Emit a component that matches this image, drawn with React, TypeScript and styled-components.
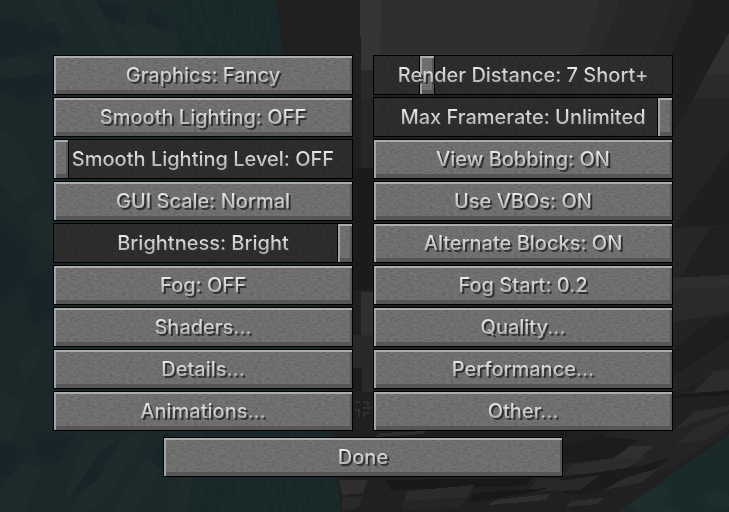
import React, { useState } from "react";
import styled, { createGlobalStyle, css } from "styled-components";

const Global = createGlobalStyle`
  * { box-sizing: border-box; }
  html, body, #root { margin: 0; min-height: 100%; }
  body { background: #202020; }
`;

const grain = `url("data:image/svg+xml,%3Csvg xmlns='http://www.w3.org/2000/svg' width='128' height='64'%3E%3Cfilter id='g' x='0' y='0' width='100%25' height='100%25'%3E%3CfeTurbulence type='fractalNoise' baseFrequency='.25 .6' numOctaves='2' seed='4' stitchTiles='stitch'/%3E%3CfeColorMatrix values='0 0 0 0 0 0 0 0 0 0 0 0 0 0 0 .3 0 0 0 -.11'/%3E%3C/filter%3E%3Crect width='128' height='64' filter='url(%23g)'/%3E%3C/svg%3E")`;

const Page = styled.main`
  position: relative;
  min-height: 100vh;
  padding: 55px 56px 35px 53px;
  display: flex;
  flex-direction: column;
  align-items: center;
  gap: 6px;
  overflow: hidden;
  font-family: Inter, "DejaVu Sans", sans-serif;
`;

const Backdrop = styled.svg`
  position: absolute;
  inset: 0;
  width: 100%;
  height: 100%;
`;

const Options = styled.div`
  position: relative;
  width: 100%;
  display: grid;
  grid-template-columns: 1fr 1fr;
  column-gap: 20px;
  row-gap: 2px;
`;

const bevel = css`
  border: 1px solid #000;
  border-radius: 0;
  background: ${grain} #737373;
  box-shadow: inset 0 2px #acacac, inset 2px 0 #a4a4a4, inset -2px 0 #565656,
    inset 0 -4px #565656;
`;

const Caption = styled.span`
  font-size: 20px;
  font-weight: 500;
  line-height: 24px;
  white-space: nowrap;
  color: transparent;
  background: linear-gradient(#e8e8e8 20%, #b4b4b4 80%);
  background-clip: text;
  -webkit-background-clip: text;
`;

const StoneButton = styled.button<{ $wide?: boolean }>`
  ${bevel}
  position: relative;
  width: 100%;
  max-width: ${(p) => (p.$wide ? "400px" : "none")};
  height: 40px;
  padding: 0;
  font-family: inherit;
  cursor: pointer;
  ${Caption} { filter: drop-shadow(2px 2px 0 #303030); }
  &:hover { background-color: #7a7f8c; }
`;

const SliderField = styled.label`
  position: relative;
  display: grid;
  place-items: center;
  height: 40px;
  border: 1px solid #000;
  background: ${grain} #2e2e2e;
  > * { grid-area: 1 / 1; }
  ${Caption} {
    z-index: 1;
    pointer-events: none;
    filter: drop-shadow(2px 2px 0 #303030);
  }
`;

const Range = styled.input`
  appearance: none;
  justify-self: stretch;
  height: 40px;
  margin: -1px;
  background: transparent;
  cursor: pointer;
  &::-webkit-slider-thumb {
    ${bevel}
    appearance: none;
    width: 16px;
    height: 40px;
  }
`;

type Option =
  | { kind: "button"; text: string }
  | { kind: "slider"; text: string; min: number; max: number; value: number };

const button = (text: string): Option => ({ kind: "button", text });
const slider = (text: string, min: number, max: number, value: number): Option => ({
  kind: "slider", text, min, max, value,
});

const options: Option[] = [
  button("Graphics: Fancy"),
  slider("Render Distance: 7 Short+", 2, 33, 7),
  button("Smooth Lighting: OFF"),
  slider("Max Framerate: Unlimited", 0, 260, 260),
  slider("Smooth Lighting Level: OFF", 0, 100, 0),
  button("View Bobbing: ON"),
  button("GUI Scale: Normal"),
  button("Use VBOs: ON"),
  slider("Brightness: Bright", 0, 100, 100),
  button("Alternate Blocks: ON"),
  button("Fog: OFF"),
  button("Fog Start: 0.2"),
  button("Shaders..."),
  button("Quality..."),
  button("Details..."),
  button("Performance..."),
  button("Animations..."),
  button("Other..."),
];

function SliderOption({ text, min, max, value }: { text: string; min: number; max: number; value: number }) {
  const [current, setCurrent] = useState(value);
  return (
    <SliderField>
      <Range type="range" min={min} max={max} value={current}
        onChange={(e) => setCurrent(Number(e.target.value))} />
      <Caption>{text}</Caption>
    </SliderField>
  );
}

/* Flat facets of the scene behind the menu: [fill, points] */
const stone: [string, string][] = [
  ["#353535", "360,0 381,0 381,28 380,70 361,70"],
  ["#2f2f2f", "381,0 600,0 580,60 380,60"],
  ["#2b2b2b", "600,0 620,0 598,60 580,60"],
  ["#272727", "620,0 675,0 650,60 598,60"],
  ["#242424", "675,0 694,0 668,60 650,60"],
  ["#1f1f1f", "694,0 729,0 729,33 715,60 668,60"],
  ["#1f1f1f", "673,60 715,60 694,98 673,98"],
  ["#303030", "729,33 729,74 706,74"],
  ["#2a2a2a", "706,74 729,74 729,98 694,98"],
  ["#242424", "694,98 729,98 729,160 673,228 673,130"],
  ["#1f1f1f", "673,98 694,98 673,134"],
  ["#1f1f1f", "729,150 729,225 673,228"],
  ["#262626", "673,228 729,225 729,276 673,278"],
  ["#202020", "710,227 729,226 729,276 680,278"],
  ["#2e2e2e", "673,278 729,275 729,286 673,290"],
  ["#2a2a2a", "673,290 729,286 729,312 673,322"],
  ["#292929", "361,70 373,70 373,100 361,100"],
  ["#262626", "361,100 373,100 373,168 361,168"],
  ["#1b1b1b", "353,168 373,168 373,290 353,290"],
  ["#303030", "361,292 373,292 373,345 361,345"],
  ["#292929", "353,335 373,335 373,392 353,392"],
  ["#1c1c1c", "353,368 362,368 362,392 353,392"],
  ["#232323", "673,322 729,312 729,370 673,392"],
  ["#1e1e1e", "673,350 712,318 729,316 729,340 673,376"],
  ["#2c2c2c", "715,371 729,370 729,390 692,393"],
  ["#191919", "673,395 729,391 729,395 673,398"],
  ["#2b2b2b", "694,412 729,405 729,410 712,424 674,430"],
  ["#242424", "563,450 590,440 628,428 673,430 729,410 729,430 673,468 600,474 563,480"],
  ["#2a2a2a", "697,428 729,414 729,424 706,440 675,444"],
  ["#1c1c1c", "563,446 600,436 640,440 612,458 563,464"],
  ["#303030", "630,446 654,446 640,457 613,460"],
  ["#2c2c2c", "572,465 610,459 645,457 622,471 563,475"],
  ["#1b1b1b", "563,477 641,466 672,457 640,480 580,495 563,494"],
  ["#2c2c2c", "625,478 660,468 642,482 604,490"],
  ["#282828", "538,478 566,480 600,475 580,490 528,492"],
  ["#1d1d1d", "384,433 450,431 570,431 570,436 384,436"],
  ["#2f2f2f", "380,433 427,431 423,434 375,437"],
  ["#2e2e2e", "339,480 368,480 363,493 342,495"],
  ["#292929", "342,498 362,496 359,508 342,510"],
  ["#191919", "386,480 532,478 526,486 390,490"],
  ["#2b2b2b", "408,491 474,485 467,497 404,501"],
  ["#252525", "404,501 467,497 460,508 402,510"],
  ["#2f2f2f", "496,500 550,494 546,500 488,505"],
  ["#181818", "473,493 548,488 535,492 470,503"],
  ["#2d2d2d", "573,501 603,498 598,504 565,507"],
];

const waterLight: string[] = [
  "0,12 18,28 22,55 44,70 30,90 0,72",
  "33,0 58,0 73,30 64,36 46,22",
  "74,0 98,0 120,54 106,54",
  "115,23 146,32 162,54 133,54",
  "144,18 160,32 177,54 158,54",
  "172,0 180,0 206,54 200,54",
  "190,0 196,0 220,54 214,54",
  "0,128 24,145 40,190 18,205 0,184",
  "28,214 46,208 53,226 53,254 34,240",
  "18,362 36,345 42,355 26,385",
  "0,390 24,402 12,440 0,446",
  "83,440 122,440 92,485 64,500",
  "127,438 143,438 104,502 83,512 68,512",
  "145,460 162,468 132,512 112,512",
  "0,489 20,464 42,468 26,512 0,512",
  "182,478 202,480 186,512 173,512",
];

const waterDark: string[] = [
  "0,18 27,24 45,50 0,60",
  "32,29 53,21 62,38 60,47 36,43",
  "96,0 128,6 126,24 105,19",
  "148,8 170,20 166,31 146,24",
  "0,80 53,72 53,90 34,105 0,91",
  "0,220 26,244 33,274 0,304",
  "22,280 53,268 53,315 33,325",
  "33,432 77,434 62,457 48,468 34,450",
  "100,452 122,437 96,482 70,497",
  "165,433 185,438 163,470 150,461",
  "0,440 28,452 10,475 0,478",
];

function World() {
  return (
    <Backdrop viewBox="0 0 729 512" preserveAspectRatio="none" aria-hidden="true" shapeRendering="crispEdges">
      <defs>
        <linearGradient id="sea" x1="0" y1="0" x2="1" y2="0">
          <stop offset="0" stopColor="#1a2728" />
          <stop offset="1" stopColor="#1b2b2c" />
        </linearGradient>
        <filter id="ripple" x="0" y="0" width="1" height="1" colorInterpolationFilters="sRGB">
          <feTurbulence type="fractalNoise" baseFrequency=".3 .07" numOctaves="2" seed="9" />
          <feColorMatrix values="0 0 0 0 .08  0 0 0 0 .14  0 0 0 0 .14  1.2 0 0 0 -.35" />
          <feComposite in2="SourceGraphic" operator="in" />
        </filter>
      </defs>
      <rect width="729" height="512" fill="#202020" />
      {stone.map(([fill, points], i) => <polygon key={i} fill={fill} points={points} />)}
      <polygon fill="url(#sea)" points="0,0 276,0 283,55 332,431 340,512 0,512" />
      <g opacity="0.6">
        {waterLight.map((points) => <polygon key={points} fill="#1f2d2d" points={points} />)}
        {waterDark.map((points) => <polygon key={points} fill="#172327" points={points} />)}
      </g>
      <polygon fill="#1c2c2e" filter="url(#ripple)" points="165,0 276,0 283,55 332,431 340,512 185,512 205,431 185,55" />
      <polygon fill="#1a292a" points="729,434 660,482 618,512 729,512" />
      <polygon fill="#1e2e2f" points="662,484 672,493 660,501 680,512 639,512 629,504" />
      <polygon fill="#1e2e2f" points="702,498 716,490 729,496 729,506 712,508" />
      <path d="M355 402h5M363 402h5v4M355 410h4v7M363 408h9M364 417v-4h5" fill="none" stroke="#303030" strokeWidth="2" />
    </Backdrop>
  );
}

export default function App() {
  return (
    <Page>
      <Global />
      <World />
      <Options>
        {options.map((o) =>
          o.kind === "slider" ? (
            <SliderOption key={o.text} text={o.text} min={o.min} max={o.max} value={o.value} />
          ) : (
            <StoneButton key={o.text} type="button"><Caption>{o.text}</Caption></StoneButton>
          )
        )}
      </Options>
      <StoneButton type="button" $wide><Caption>Done</Caption></StoneButton>
    </Page>
  );
}
